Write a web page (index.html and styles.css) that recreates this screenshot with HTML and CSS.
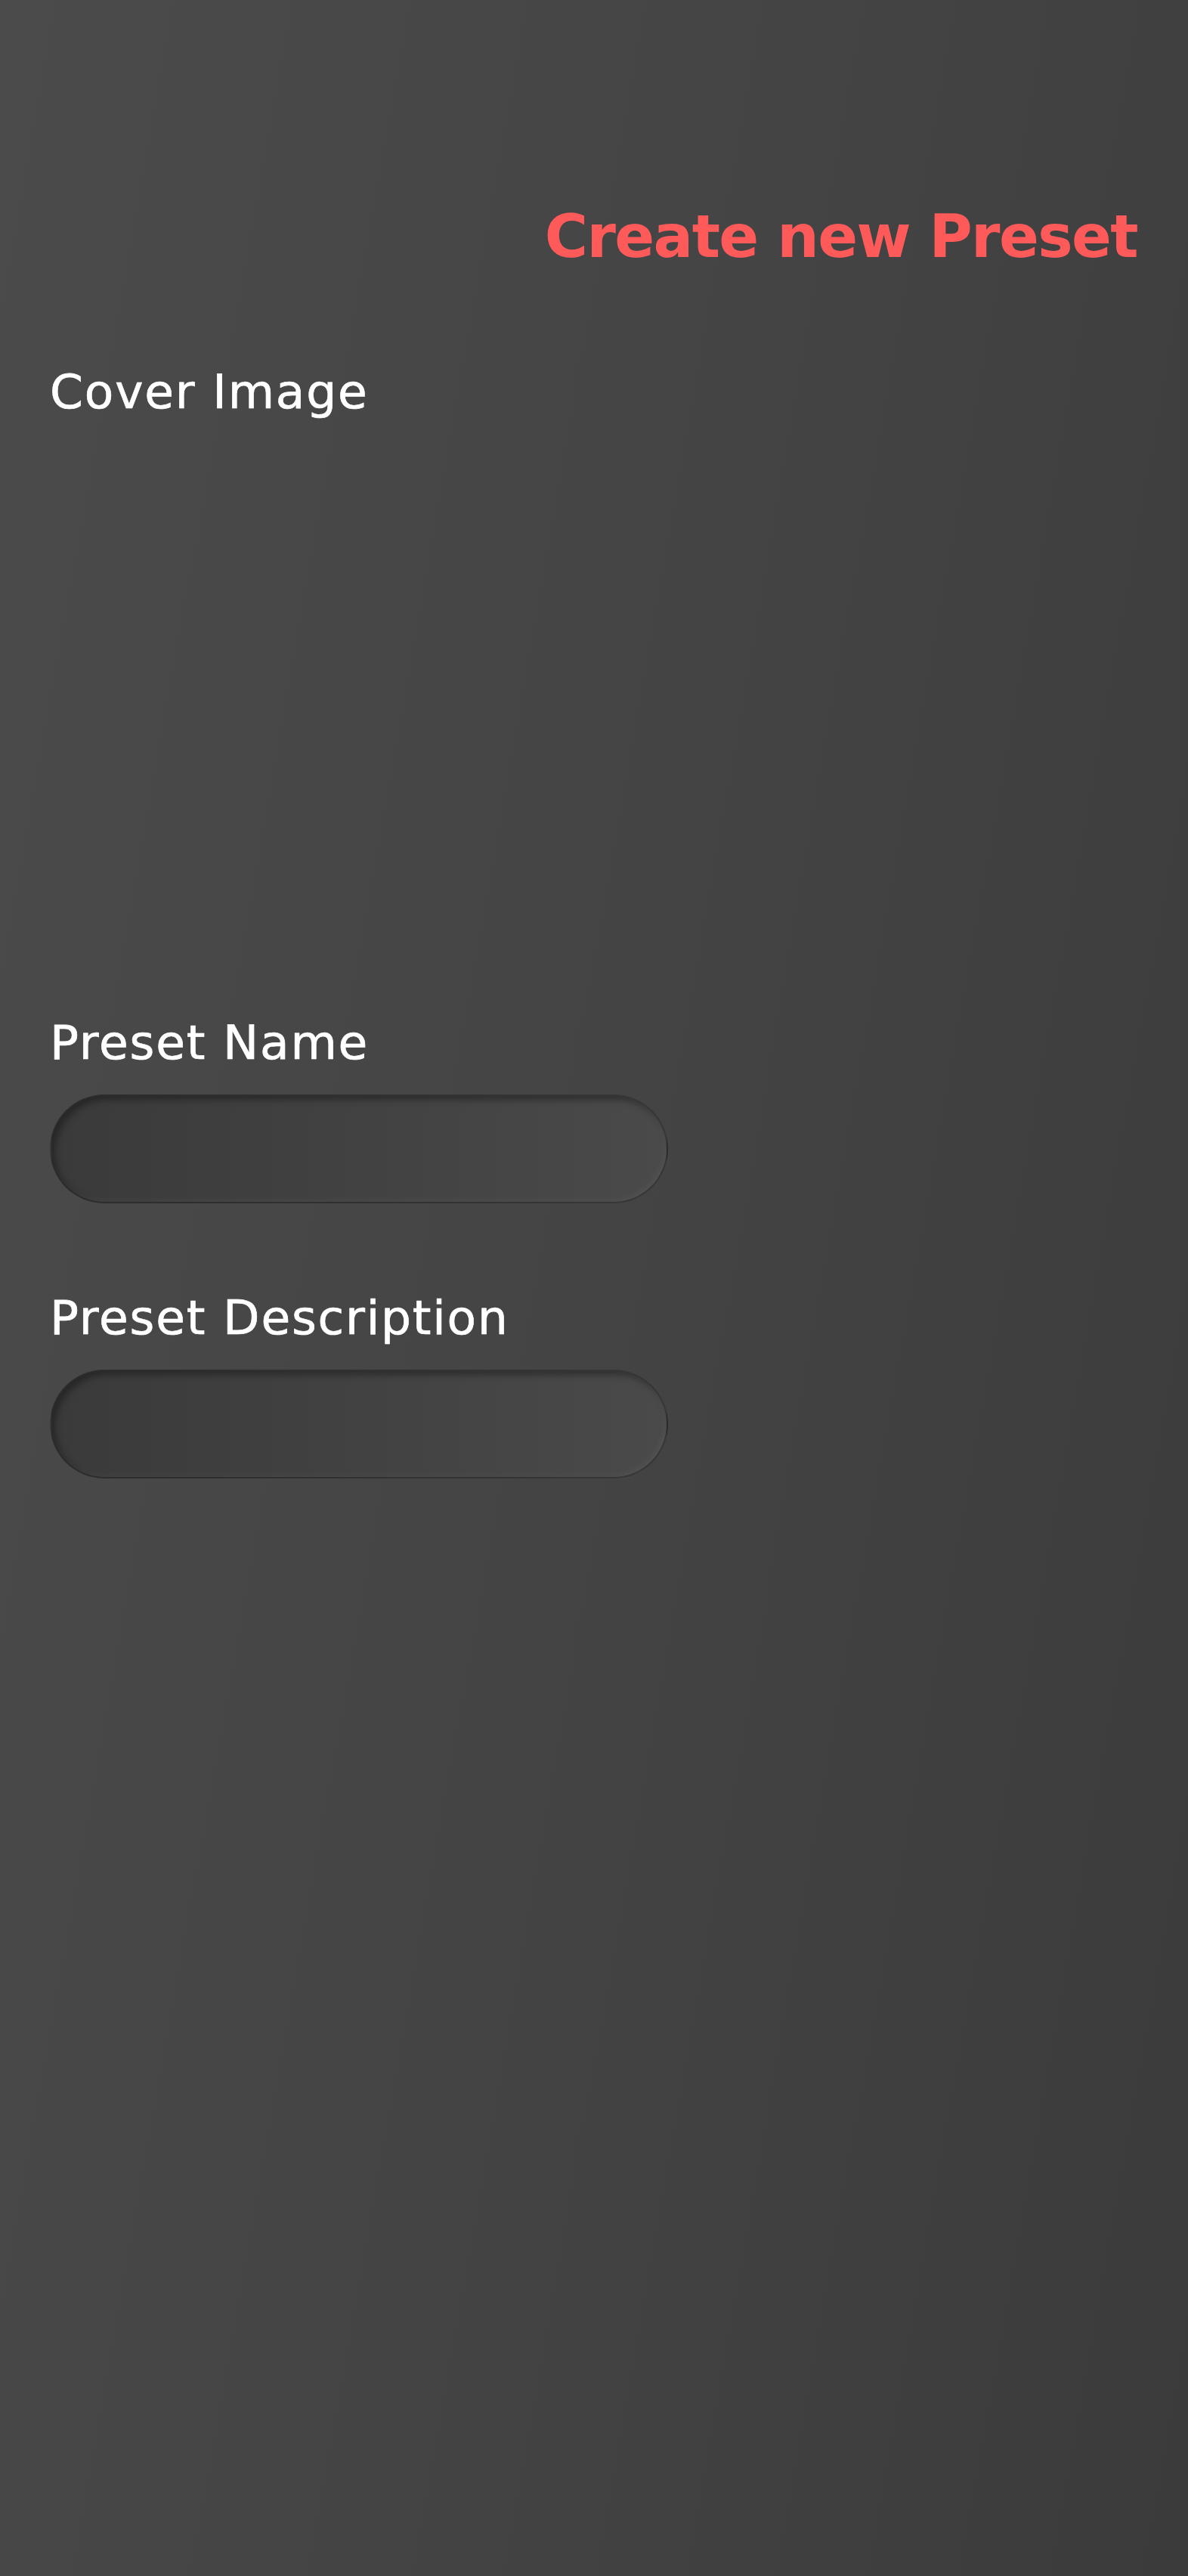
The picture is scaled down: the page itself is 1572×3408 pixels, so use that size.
FILE: index.html
```html
<!DOCTYPE html>
<html lang="en">
<head>
<meta charset="utf-8">
<title>Create new Preset</title>
<link rel="stylesheet" href="styles.css">
</head>
<body>
<main class="page">
  <h1 class="title">Create new Preset</h1>
  <section class="field">
    <label class="label">Cover Image</label>
    <div class="cover"></div>
  </section>
  <section class="field">
    <label class="label" for="name">Preset Name</label>
    <input class="input" id="name" type="text">
  </section>
  <section class="field field-desc">
    <label class="label" for="desc">Preset Description</label>
    <input class="input" id="desc" type="text">
  </section>
</main>
</body>
</html>
```
FILE: styles.css
```css
html, body {
  margin: 0;
  padding: 0;
}
body {
  min-height: 3408px;
  background: linear-gradient(100deg, #4b4b4b 0%, #444444 50%, #3b3b3b 100%);
  font-family: "DejaVu Sans", "Liberation Sans", sans-serif;
  color: #ffffff;
}
.page {
  display: flex;
  flex-direction: column;
  padding: 274px 67px 0 66px;
}
.title {
  margin: 0 0 135px;
  text-align: right;
  font-size: 78px;
  line-height: 1;
  font-weight: 700;
  letter-spacing: -1.6px;
  color: #ff5a5a;
}
.field {
  display: flex;
  flex-direction: column;
  align-items: flex-start;
}
.label {
  display: block;
  font-size: 63px;
  line-height: 1;
  font-weight: 400;
  letter-spacing: 1.8px;
  -webkit-text-stroke: 0.7px #ffffff;
  color: #ffffff;
  margin-bottom: 37px;
}
.cover {
  height: 761px;
}
.field-desc {
  margin-top: 120px;
}
.input {
  box-sizing: border-box;
  width: 818px;
  height: 144px;
  margin: 0;
  padding: 0 50px;
  border-radius: 72px;
  border: 2px solid rgba(0, 0, 0, 0.25);
  background: linear-gradient(90deg, #3a3a3a 0%, #414141 45%, #4a4a4a 100%);
  box-shadow: inset 5px 5px 10px rgba(0, 0, 0, 0.35), inset -3px -3px 6px rgba(255, 255, 255, 0.05);
  outline: none;
  font-family: inherit;
  font-size: 48px;
  color: #ffffff;
}
```
